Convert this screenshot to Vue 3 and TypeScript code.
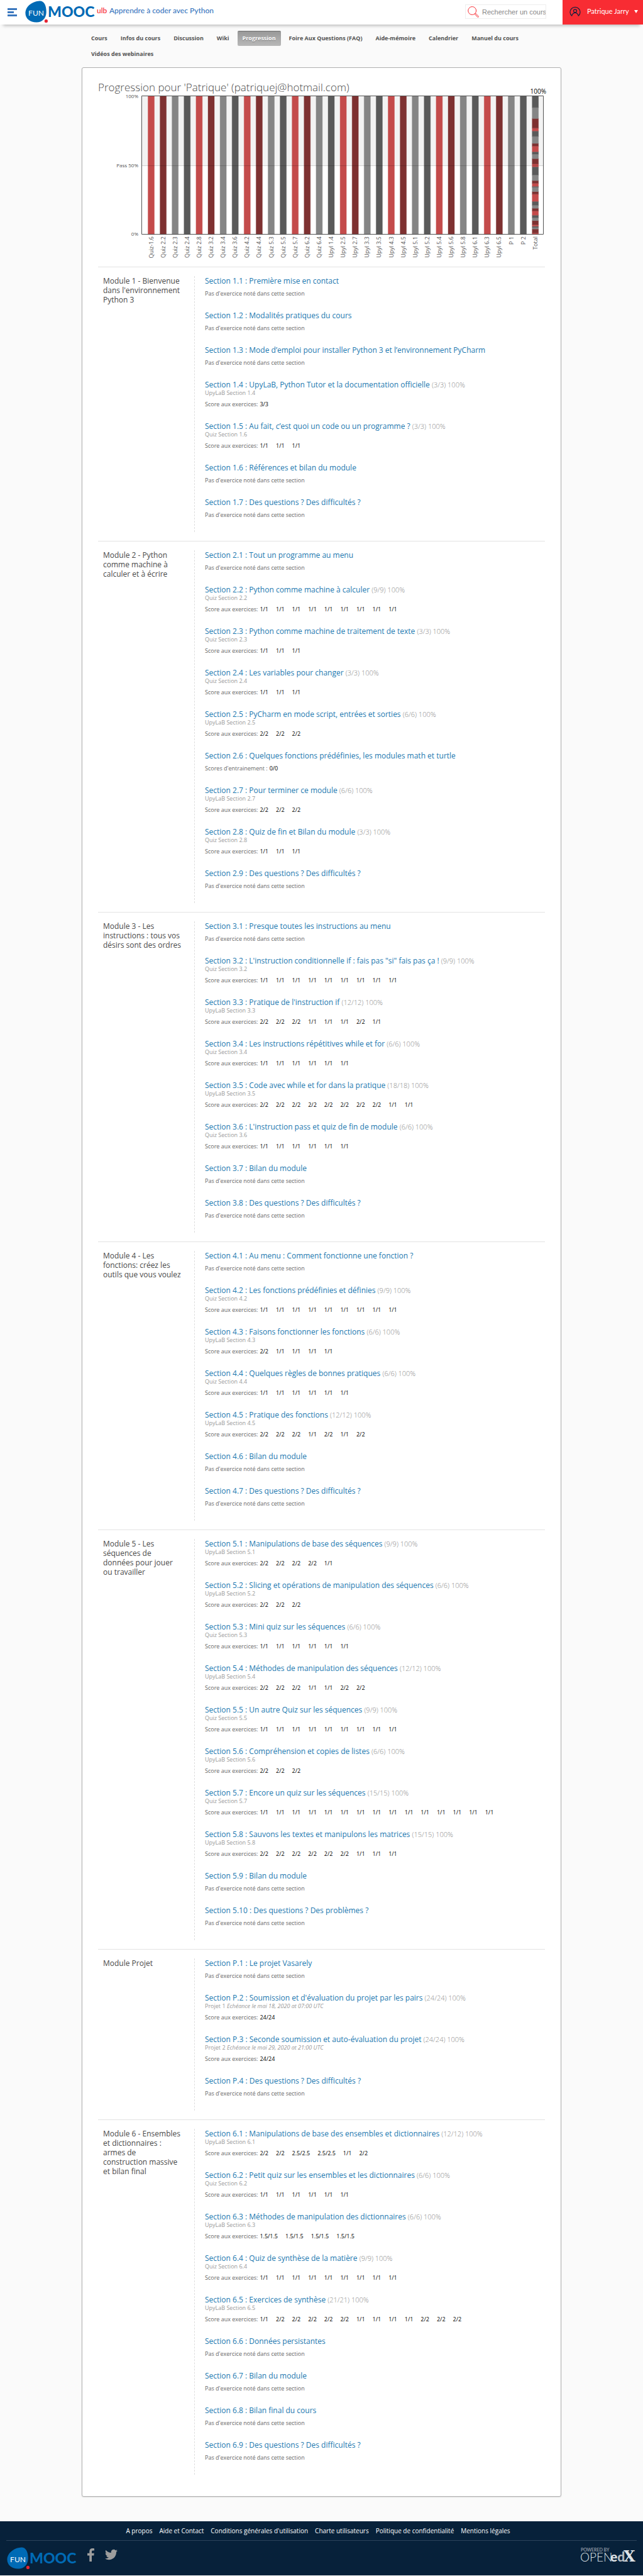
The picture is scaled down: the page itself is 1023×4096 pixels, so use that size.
<script setup lang="ts">
interface Section {
  title: string
  total?: string
  sub?: string
  due?: string
  label?: string
  scores?: string[]
}
interface Module {
  title: string
  sections: Section[]
}

const rep = (value: string, count: number): string[] => Array<string>(count).fill(value)
const list = (values: string): string[] => values.split(' ')
const none = (title: string): Section => ({ title })
const quiz = (id: string, name: string, count: number, sub = id): Section => ({
  title: `Section ${id} : ${name}`,
  total: `(${count}/${count}) 100%`,
  sub: `Quiz Section ${sub}`,
  scores: rep('1/1', count),
})
const lab = (id: string, name: string, total: number, scores: string): Section => ({
  title: `Section ${id} : ${name}`,
  total: `(${total}/${total}) 100%`,
  sub: `UpyLaB Section ${id}`,
  scores: list(scores),
})

const tabs = [
  'Cours', 'Infos du cours', 'Discussion', 'Wiki', 'Progression', 'Foire Aux Questions (FAQ)',
  'Aide-mémoire', 'Calendrier', 'Manuel du cours', 'Vidéos des webinaires',
]

const modules: Module[] = [
  {
    title: "Module 1 - Bienvenue dans l'environnement Python 3",
    sections: [
      none('Section 1.1 : Première mise en contact'),
      none('Section 1.2 : Modalités pratiques du cours'),
      none('Section 1.3 : Mode d’emploi pour installer Python 3 et l’environnement PyCharm'),
      lab('1.4', 'UpyLaB, Python Tutor et la documentation officielle', 3, '3/3'),
      quiz('1.5', 'Au fait, c’est quoi un code ou un programme ?', 3, '1.6'),
      none('Section 1.6 : Références et bilan du module'),
      none('Section 1.7 : Des questions ? Des difficultés ?'),
    ],
  },
  {
    title: 'Module 2 - Python comme machine à calculer et à écrire',
    sections: [
      none('Section 2.1 : Tout un programme au menu'),
      quiz('2.2', 'Python comme machine à calculer', 9),
      quiz('2.3', 'Python comme machine de traitement de texte', 3),
      quiz('2.4', 'Les variables pour changer', 3),
      lab('2.5', 'PyCharm en mode script, entrées et sorties', 6, '2/2 2/2 2/2'),
      {
        title: 'Section 2.6 : Quelques fonctions prédéfinies, les modules math et turtle',
        label: "Scores d'entrainement :",
        scores: ['0/0'],
      },
      lab('2.7', 'Pour terminer ce module', 6, '2/2 2/2 2/2'),
      quiz('2.8', 'Quiz de fin et Bilan du module', 3),
      none('Section 2.9 : Des questions ? Des difficultés ?'),
    ],
  },
  {
    title: 'Module 3 - Les instructions : tous vos désirs sont des ordres',
    sections: [
      none('Section 3.1 : Presque toutes les instructions au menu'),
      quiz('3.2', 'L\'instruction conditionnelle if : fais pas "si" fais pas ça !', 9),
      lab('3.3', "Pratique de l'instruction if", 12, '2/2 2/2 2/2 1/1 1/1 1/1 2/2 1/1'),
      quiz('3.4', 'Les instructions répétitives while et for', 6),
      lab('3.5', 'Code avec while et for dans la pratique', 18, '2/2 2/2 2/2 2/2 2/2 2/2 2/2 2/2 1/1 1/1'),
      quiz('3.6', "L'instruction pass et quiz de fin de module", 6),
      none('Section 3.7 : Bilan du module'),
      none('Section 3.8 : Des questions ? Des difficultés ?'),
    ],
  },
  {
    title: 'Module 4 - Les fonctions: créez les outils que vous voulez',
    sections: [
      none('Section 4.1 : Au menu : Comment fonctionne une fonction ?'),
      quiz('4.2', 'Les fonctions prédéfinies et définies', 9),
      lab('4.3', 'Faisons fonctionner les fonctions', 6, '2/2 1/1 1/1 1/1 1/1'),
      quiz('4.4', 'Quelques règles de bonnes pratiques', 6),
      lab('4.5', 'Pratique des fonctions', 12, '2/2 2/2 2/2 1/1 2/2 1/1 2/2'),
      none('Section 4.6 : Bilan du module'),
      none('Section 4.7 : Des questions ? Des difficultés ?'),
    ],
  },
  {
    title: 'Module 5 - Les séquences de données pour jouer ou travailler',
    sections: [
      lab('5.1', 'Manipulations de base des séquences', 9, '2/2 2/2 2/2 2/2 1/1'),
      lab('5.2', 'Slicing et opérations de manipulation des séquences', 6, '2/2 2/2 2/2'),
      quiz('5.3', 'Mini quiz sur les séquences', 6),
      lab('5.4', 'Méthodes de manipulation des séquences', 12, '2/2 2/2 2/2 1/1 1/1 2/2 2/2'),
      quiz('5.5', 'Un autre Quiz sur les séquences', 9),
      lab('5.6', 'Compréhension et copies de listes', 6, '2/2 2/2 2/2'),
      quiz('5.7', 'Encore un quiz sur les séquences', 15),
      lab('5.8', 'Sauvons les textes et manipulons les matrices', 15, '2/2 2/2 2/2 2/2 2/2 2/2 1/1 1/1 1/1'),
      none('Section 5.9 : Bilan du module'),
      none('Section 5.10 : Des questions ? Des problèmes ?'),
    ],
  },
  {
    title: 'Module Projet',
    sections: [
      none('Section P.1 : Le projet Vasarely'),
      {
        title: "Section P.2 : Soumission et d'évaluation du projet par les pairs",
        total: '(24/24) 100%',
        sub: 'Projet 1',
        due: 'Echéance le mai 18, 2020 at 07:00 UTC',
        scores: ['24/24'],
      },
      {
        title: 'Section P.3 : Seconde soumission et auto-évaluation du projet',
        total: '(24/24) 100%',
        sub: 'Projet 2',
        due: 'Echéance le mai 29, 2020 at 21:00 UTC',
        scores: ['24/24'],
      },
      none('Section P.4 : Des questions ? Des difficultés ?'),
    ],
  },
  {
    title: 'Module 6 - Ensembles et dictionnaires : armes de construction\u00a0massive et bilan final',
    sections: [
      lab('6.1', 'Manipulations de base des ensembles et dictionnaires', 12, '2/2 2/2 2.5/2.5 2.5/2.5 1/1 2/2'),
      quiz('6.2', 'Petit quiz sur les ensembles et les dictionnaires', 6),
      lab('6.3', 'Méthodes de manipulation des dictionnaires', 6, '1.5/1.5 1.5/1.5 1.5/1.5 1.5/1.5'),
      quiz('6.4', 'Quiz de synthèse de la matière', 9),
      lab('6.5', 'Exercices de synthèse', 21, '1/1 2/2 2/2 2/2 2/2 2/2 1/1 1/1 1/1 1/1 2/2 2/2 2/2'),
      none('Section 6.6 : Données persistantes'),
      none('Section 6.7 : Bilan du module'),
      none('Section 6.8 : Bilan final du cours'),
      none('Section 6.9 : Des questions ? Des difficultés ?'),
    ],
  },
]

// Chart geometry, in viewBox units
const palette = ['#c44b4b', '#7e3131', '#858585', '#5a5a5a']
const top = 2
const bottom = 222
const columnX = (i: number): number => 84.5 + i * 19.1
const columns = [
  'Quiz-1.6',
  ...list('2.2 2.3 2.4 2.8 3.2 3.4 3.6 4.2 4.4 5.3 5.5 5.7 6.2 6.4').map((n) => `Quiz ${n}`),
  ...list('1.4 2.5 2.7 3.3 3.5 4.3 4.5 5.1 5.2 5.4 5.6 5.8 6.1 6.3 6.5').map((n) => `Upyl ${n}`),
  'P 1',
  'P 2',
]
// Weight of each graded item in the stacked total column, from the bottom up (per 1020)
const weights = [
  11, 30, 11, 10, 10, 31, 21, 19, 31, 20, 22, 29, 53, 19, 32, 7,
  22, 20, 41, 61, 20, 40, 33, 18, 41, 20, 52, 40, 21, 71, 81, 83,
]
let used = 0
const segments = weights.map((w, i) => {
  used += w
  return { y: bottom - (used * (bottom - top)) / 1020, h: (w * (bottom - top)) / 1020, color: palette[i % 4] }
})

const footerLinks = [
  'A propos', 'Aide et Contact', "Conditions générales d'utilisation", 'Charte utilisateurs',
  'Politique de confidentialité', 'Mentions légales',
]
</script>

<template>
  <div class="page">
    <header class="topbar">
      <button class="burger" type="button" aria-label="Menu"><i></i><i></i><i></i></button>
      <a class="logo" href="#" aria-label="FUN MOOC">
        <svg width="111" height="36" viewBox="0 0 111 36">
          <path d="M23 .4C30 .2 33.600 7 33.700 18 33.700 28 27 34.600 18 34.600 8 34.600.4 29 .4 19.500.4 9 12 .8 23 .4Z" fill="#006ab5" />
          <circle cx="33.400" cy="32.400" r="2.600" fill="#e52534" />
          <text x="17.500" y="23.500" class="fun">FUN</text>
          <text x="36" y="25.500" class="mooc">MOOC</text>
        </svg>
      </a>
      <p class="course"><span>ulb</span> <a href="#">Apprendre à coder avec Python</a></p>
      <label class="search">
        <svg width="18" height="18" viewBox="0 0 18 18" fill="none" stroke="#f82c33">
          <circle cx="7.200" cy="7" r="6.400" />
          <path d="M11.300 12.200l1.200-1.200 4.800 5q.4.6-.2 1.200t-1.200.1Z" />
        </svg>
        <input type="text" placeholder="Rechercher un cours" aria-label="Rechercher un cours" />
      </label>
      <button class="user" type="button">
        <svg width="18" height="16" viewBox="0 0 18 16" fill="none" stroke="#14213d" stroke-width="1.200">
          <path d="M3.600 15.200A8 8 0 1 1 14.400 15.200" />
          <circle cx="9" cy="7.300" r="2.500" />
          <path d="M3.600 15.500Q5 10.400 9 10.400T14.400 15.500" />
        </svg>
        <span>Patrique Jarry</span>
        <i class="caret"></i>
      </button>
    </header>

    <nav class="tabs" aria-label="Cours">
      <a v-for="tab in tabs" :key="tab" href="#" :class="{ active: tab === 'Progression' }">{{ tab }}</a>
    </nav>

    <main class="card">
      <h1>Progression pour 'Patrique' (patriquej@hotmail.com)</h1>
      <svg class="chart" viewBox="0 0 711 273" role="img" aria-label="Progression">
        <rect x="69" y="2" width="640" height="110" fill="#f3f3f3" />
        <g v-for="(name, i) in columns" :key="name">
          <rect :x="columnX(i) - 5" :y="top" width="10" :height="bottom - top" :fill="palette[i % 4]" :stroke="palette[i % 4]" stroke-opacity=".4" />
          <text class="tick" text-anchor="end" :transform="`translate(${columnX(i) + 3} 225) rotate(-90)`">{{ name }}</text>
        </g>
        <rect v-for="(s, i) in segments" :key="i" :x="columnX(32) - 5" :y="s.y" width="10" :height="s.h" :fill="s.color" :stroke="s.color" stroke-opacity=".4" />
        <text class="tick" text-anchor="end" :transform="`translate(${columnX(32) + 3} 225) rotate(-90)`">Total</text>
        <path d="M69 112.500H709" stroke="#000" stroke-opacity=".18" />
        <path d="M69.500 1.500H708.500V221.500H69.500Z" fill="none" stroke="#545454" />
        <text class="axis" x="64" y="5" text-anchor="end">100%</text>
        <text class="axis" x="64" y="115" text-anchor="end">Pass 50%</text>
        <text class="axis" x="64" y="224" text-anchor="end">0%</text>
        <text class="grade" x="713" y="-2" text-anchor="end">100%</text>
      </svg>

      <section v-for="m in modules" :key="m.title" class="module">
        <h2>{{ m.title }}</h2>
        <div class="sections">
          <article v-for="s in m.sections" :key="s.title" :class="['section', { graded: s.sub }]">
            <h3><a href="#">{{ s.title }}</a> <span v-if="s.total">{{ s.total }}</span></h3>
            <p v-if="s.sub" class="sub">{{ s.sub }} <em v-if="s.due">{{ s.due }}</em></p>
            <dl v-if="s.scores" class="scores">
              <dt>{{ s.label ?? 'Score aux exercices:' }}</dt>
              <dd v-for="(v, i) in s.scores" :key="i">{{ v }}</dd>
            </dl>
            <p v-else class="empty">Pas d'exercice noté dans cette section</p>
          </article>
        </div>
      </section>
    </main>

    <footer class="footer">
      <nav class="links" aria-label="Informations">
        <a v-for="l in footerLinks" :key="l" href="#">{{ l }}</a>
      </nav>
      <div class="brands">
        <a class="logo" href="#" aria-label="FUN MOOC">
          <svg width="111" height="36" viewBox="0 0 111 36">
            <path d="M23 .4C30 .2 33.600 7 33.700 18 33.700 28 27 34.600 18 34.600 8 34.600.4 29 .4 19.500.4 9 12 .8 23 .4Z" fill="#006ab5" />
            <circle cx="33.400" cy="32.400" r="2.600" fill="#e52534" />
            <text x="17.500" y="23.500" class="fun">FUN</text>
            <text x="36" y="25.500" class="mooc">MOOC</text>
          </svg>
        </a>
        <a class="social" href="#" aria-label="Facebook">
          <svg width="11" height="21" viewBox="0 0 11 21"><path d="M3.300 21V11.500H0V7.700h3.300V5C3.300 1.800 5.200 0 8.100 0c1.300 0 2.500.1 2.900.2v3.300H9C7.400 3.500 7 4.300 7 5.400v2.300h3.800l-.5 3.800H7V21z" /></svg>
        </a>
        <a class="social" href="#" aria-label="Twitter">
          <svg width="20" height="20" viewBox="0 0 24 24"><path d="M23.953 4.570a10 10 0 01-2.825.775 4.958 4.958 0 002.163-2.723c-.951.555-2.005.959-3.127 1.184a4.920 4.920 0 00-8.384 4.482C7.690 8.095 4.067 6.130 1.640 3.162a4.822 4.822 0 00-.666 2.475c0 1.710.87 3.213 2.188 4.096a4.904 4.904 0 01-2.228-.616v.06a4.923 4.923 0 003.946 4.827 4.996 4.996 0 01-2.212.085 4.936 4.936 0 004.604 3.417 9.867 9.867 0 01-6.102 2.105c-.39 0-.779-.023-1.170-.067a13.995 13.995 0 007.557 2.209c9.053 0 13.998-7.496 13.998-13.985 0-.21 0-.42-.015-.63A9.935 9.935 0 0024 4.590z" /></svg>
        </a>
        <a class="openedx" href="#">
          <svg width="90" height="24" viewBox="0 0 90 24">
            <text x="1" y="7" class="powered">POWERED BY</text>
            <text x="0" y="23" class="open">OPEN</text>
            <text x="48" y="23" class="ed">e<tspan fill="#b5bbc1">d</tspan></text>
            <text x="69" y="23" class="ex">X</text>
          </svg>
        </a>
      </div>
    </footer>
  </div>
</template>

<style>
body {
  margin: 0;
  background: #fafafa;
}
</style>

<style scoped>
.page {
  font-family: 'Open Sans', 'Noto Sans', sans-serif;
  color: #4a4a4a;
}
a {
  color: inherit;
  text-decoration: none;
}
button {
  border: 0;
  padding: 0;
  font: inherit;
  cursor: pointer;
}
h1, h2, h3, p, dl, dd {
  margin: 0;
}
svg {
  display: block;
  flex: none;
  overflow: visible;
}

.topbar {
  display: flex;
  align-items: flex-start;
  height: 39px;
  background: #fff;
  box-shadow: 0 7px 5px -5px rgba(0, 0, 0, 0.25);
}
.burger {
  display: flex;
  flex-direction: column;
  gap: 2px;
  margin: 13px 13px 0 12px;
  background: none;
}
.burger i {
  width: 15px;
  height: 3px;
  background: #3a77be;
}
.burger i:nth-child(2) {
  width: 10px;
}
.topbar .logo {
  margin-top: 1px;
}
.fun {
  font: 400 12px Lato, sans-serif;
  fill: #fff;
  text-anchor: middle;
}
.mooc {
  font: 900 23px Lato, sans-serif;
  fill: #006ab5;
}
.course {
  flex: 1;
  margin: 9px 0 0 3px;
  font: 500 12px/16px Lato, sans-serif;
  color: #3a77be;
}
.course span {
  margin-right: 1px;
  color: #f82c33;
}
.search {
  display: flex;
  align-items: center;
  gap: 5px;
  box-sizing: border-box;
  width: 129px;
  height: 23px;
  margin: 7px 26px 0 0;
  padding-left: 3px;
  border: 1px solid #eee;
}
.search input {
  flex: 1;
  min-width: 0;
  padding: 0;
  border: 0;
  outline: 0;
  background: none;
  font: 11px/14px 'Liberation Sans', sans-serif;
}
.search input::placeholder {
  color: #888;
}
.user {
  display: flex;
  align-items: center;
  width: 128px;
  height: 39px;
  padding: 0 8px 3px 11px;
  background: #f82c33;
  color: #fff;
  font: 400 11px/14px Lato, sans-serif;
}
.user span {
  flex: 1;
  padding-left: 10px;
  text-align: left;
}
.caret {
  border: solid transparent;
  border-width: 5px 3px 0;
  border-top-color: #fff;
}

.tabs {
  display: flex;
  flex-wrap: wrap;
  column-gap: 5px;
  row-gap: 1px;
  box-sizing: border-box;
  width: 100%;
  max-width: 763px;
  margin: 0 auto;
  padding: 10px 7px 0;
}
.tabs a {
  box-sizing: border-box;
  height: 24px;
  padding: 0 8px;
  border-radius: 2px;
  font-size: 9px;
  line-height: 24px;
  font-weight: 700;
  color: #525252;
}
.tabs .active {
  border-top: 1px solid #6e6e6e;
  background: linear-gradient(#999, #b8b8b8);
  color: #fff;
  line-height: 22px;
  text-shadow: 0 1px 0 #777;
}

.card {
  box-sizing: border-box;
  width: 100%;
  max-width: 763px;
  margin: 9px auto 39px;
  padding: 19px 25px 20px;
  border: 1px solid #b0b0b0;
  border-radius: 3px;
  background: #fff;
  box-shadow: 0 1px 2px rgba(0, 0, 0, 0.12);
}
h1 {
  font-size: 17px;
  line-height: 24px;
  font-weight: 300;
}
.chart {
  width: 100%;
}
.tick {
  font-size: 9px;
  fill: #545454;
}
.axis {
  font-size: 8px;
  fill: #545454;
}
.grade {
  font-size: 10px;
  fill: #000;
}

.module {
  display: flex;
  padding: 14px 0;
  border-top: 1px solid #e3e3e3;
}
h2 {
  flex: none;
  box-sizing: border-box;
  width: 153px;
  padding: 0 19px 0 8px;
  font-size: 12px;
  line-height: 15px;
  font-weight: 400;
}
.sections {
  flex: 1;
  padding-left: 16px;
  border-left: 1px dashed #ddd;
}
.section {
  height: 55px;
}
.section.graded {
  height: 66px;
}
h3 {
  font-size: 12px;
  line-height: 15px;
  font-weight: 400;
}
h3 a {
  color: #1d79b0;
}
h3 span {
  font-size: 11px;
  font-weight: 300;
  color: #8c8c8c;
}
.sub {
  font-size: 9px;
  line-height: 11px;
  color: #999;
}
.scores {
  display: flex;
  gap: 12px;
  padding-top: 7px;
  font-size: 9px;
  line-height: 12px;
}
.scores dt {
  margin-right: -9px;
  color: #666;
}
.scores dd {
  color: #000;
}
.empty {
  padding-top: 7px;
  font-size: 9px;
  line-height: 12px;
  color: #666;
}

.footer {
  padding: 0 10px 9px;
  background: #07213a;
}
.links {
  display: flex;
  justify-content: center;
  padding: 9px 0;
  border-bottom: 1px solid #2c435a;
}
.links a {
  margin-right: 11px;
  font-size: 10px;
  line-height: 12px;
  font-weight: 500;
  color: #fff;
}
.brands {
  display: flex;
  align-items: flex-start;
  padding: 10px 0 0 1px;
}
.social {
  margin: 2px 0 0 17px;
  fill: #9d9d9d;
}
.openedx {
  margin-left: auto;
}
.powered {
  font: 400 7px Lato, sans-serif;
  fill: #b5bbc1;
}
.open {
  font: 300 19px Lato, sans-serif;
  fill: #dfe3e6;
}
.ed {
  font: 900 21px Lato, sans-serif;
  fill: #dfe3e6;
}
.ex {
  font: 700 24px 'DejaVu Serif', serif;
  fill: #dfe3e6;
}
</style>
